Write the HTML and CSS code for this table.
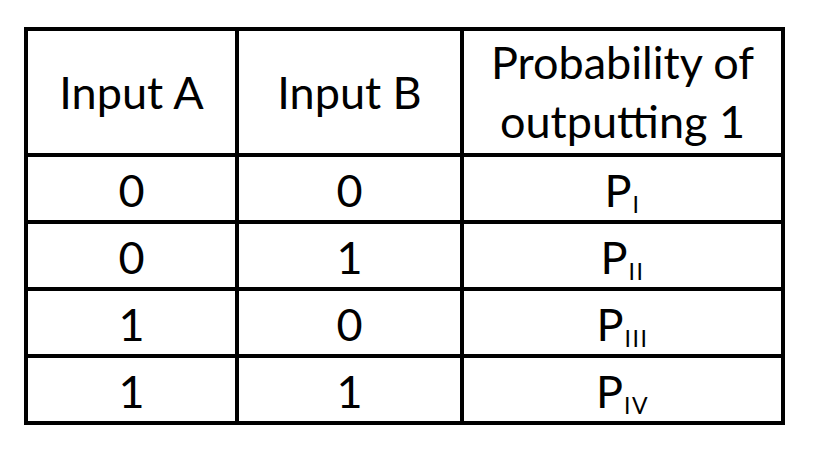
FILE: index.html
```html
<!DOCTYPE html>
<html lang="en">
<head>
<meta charset="utf-8">
<title>Probability table</title>
<link rel="stylesheet" href="styles.css">
</head>
<body>
<table class="truth">
  <thead>
    <tr class="head-row">
      <th class="c1">Input A</th>
      <th class="c2">Input B</th>
      <th class="c3">Probability of<br>outputting 1</th>
    </tr>
  </thead>
  <tbody>
    <tr><td class="c1">0</td><td class="c2">0</td><td class="c3">P<sub>I</sub></td></tr>
    <tr><td class="c1">0</td><td class="c2">1</td><td class="c3">P<sub>II</sub></td></tr>
    <tr><td class="c1">1</td><td class="c2">0</td><td class="c3">P<sub>III</sub></td></tr>
    <tr class="last"><td class="c1">1</td><td class="c2">1</td><td class="c3">P<sub>IV</sub></td></tr>
  </tbody>
</table>
</body>
</html>
```
FILE: styles.css
```css
html, body {
  margin: 0;
  padding: 0;
  background: #ffffff;
}
body {
  padding: 27px 0 0 24px;
  font-family: Lato, "Open Sans", sans-serif;
  color: #000000;
}
.truth {
  border-collapse: separate;
  border-spacing: 0;
  border: 4px solid #000;
  table-layout: fixed;
  width: 761px;
}
.truth th, .truth td {
  padding: 0;
  font-weight: 400;
  font-size: 45px;
  line-height: 59px;
  text-align: center;
  vertical-align: middle;
  border-right: 4px solid #000;
  border-bottom: 4px solid #000;
  box-sizing: border-box;
}
.truth .c3 { border-right: none; }
.truth .last td { border-bottom: none; }
.c1 { width: 211px; }
.c2 { width: 225px; }
.c3 { width: 317px; }
.head-row th { height: 126px; }
.truth tbody td { height: 65px; }
.truth .last td { height: 61px; }
.truth td { padding-top: 4px; }
sub {
  font-size: 23px;
  line-height: 0;
  vertical-align: -6px;
  letter-spacing: 1.5px;
  margin-left: 1px;
}
```
